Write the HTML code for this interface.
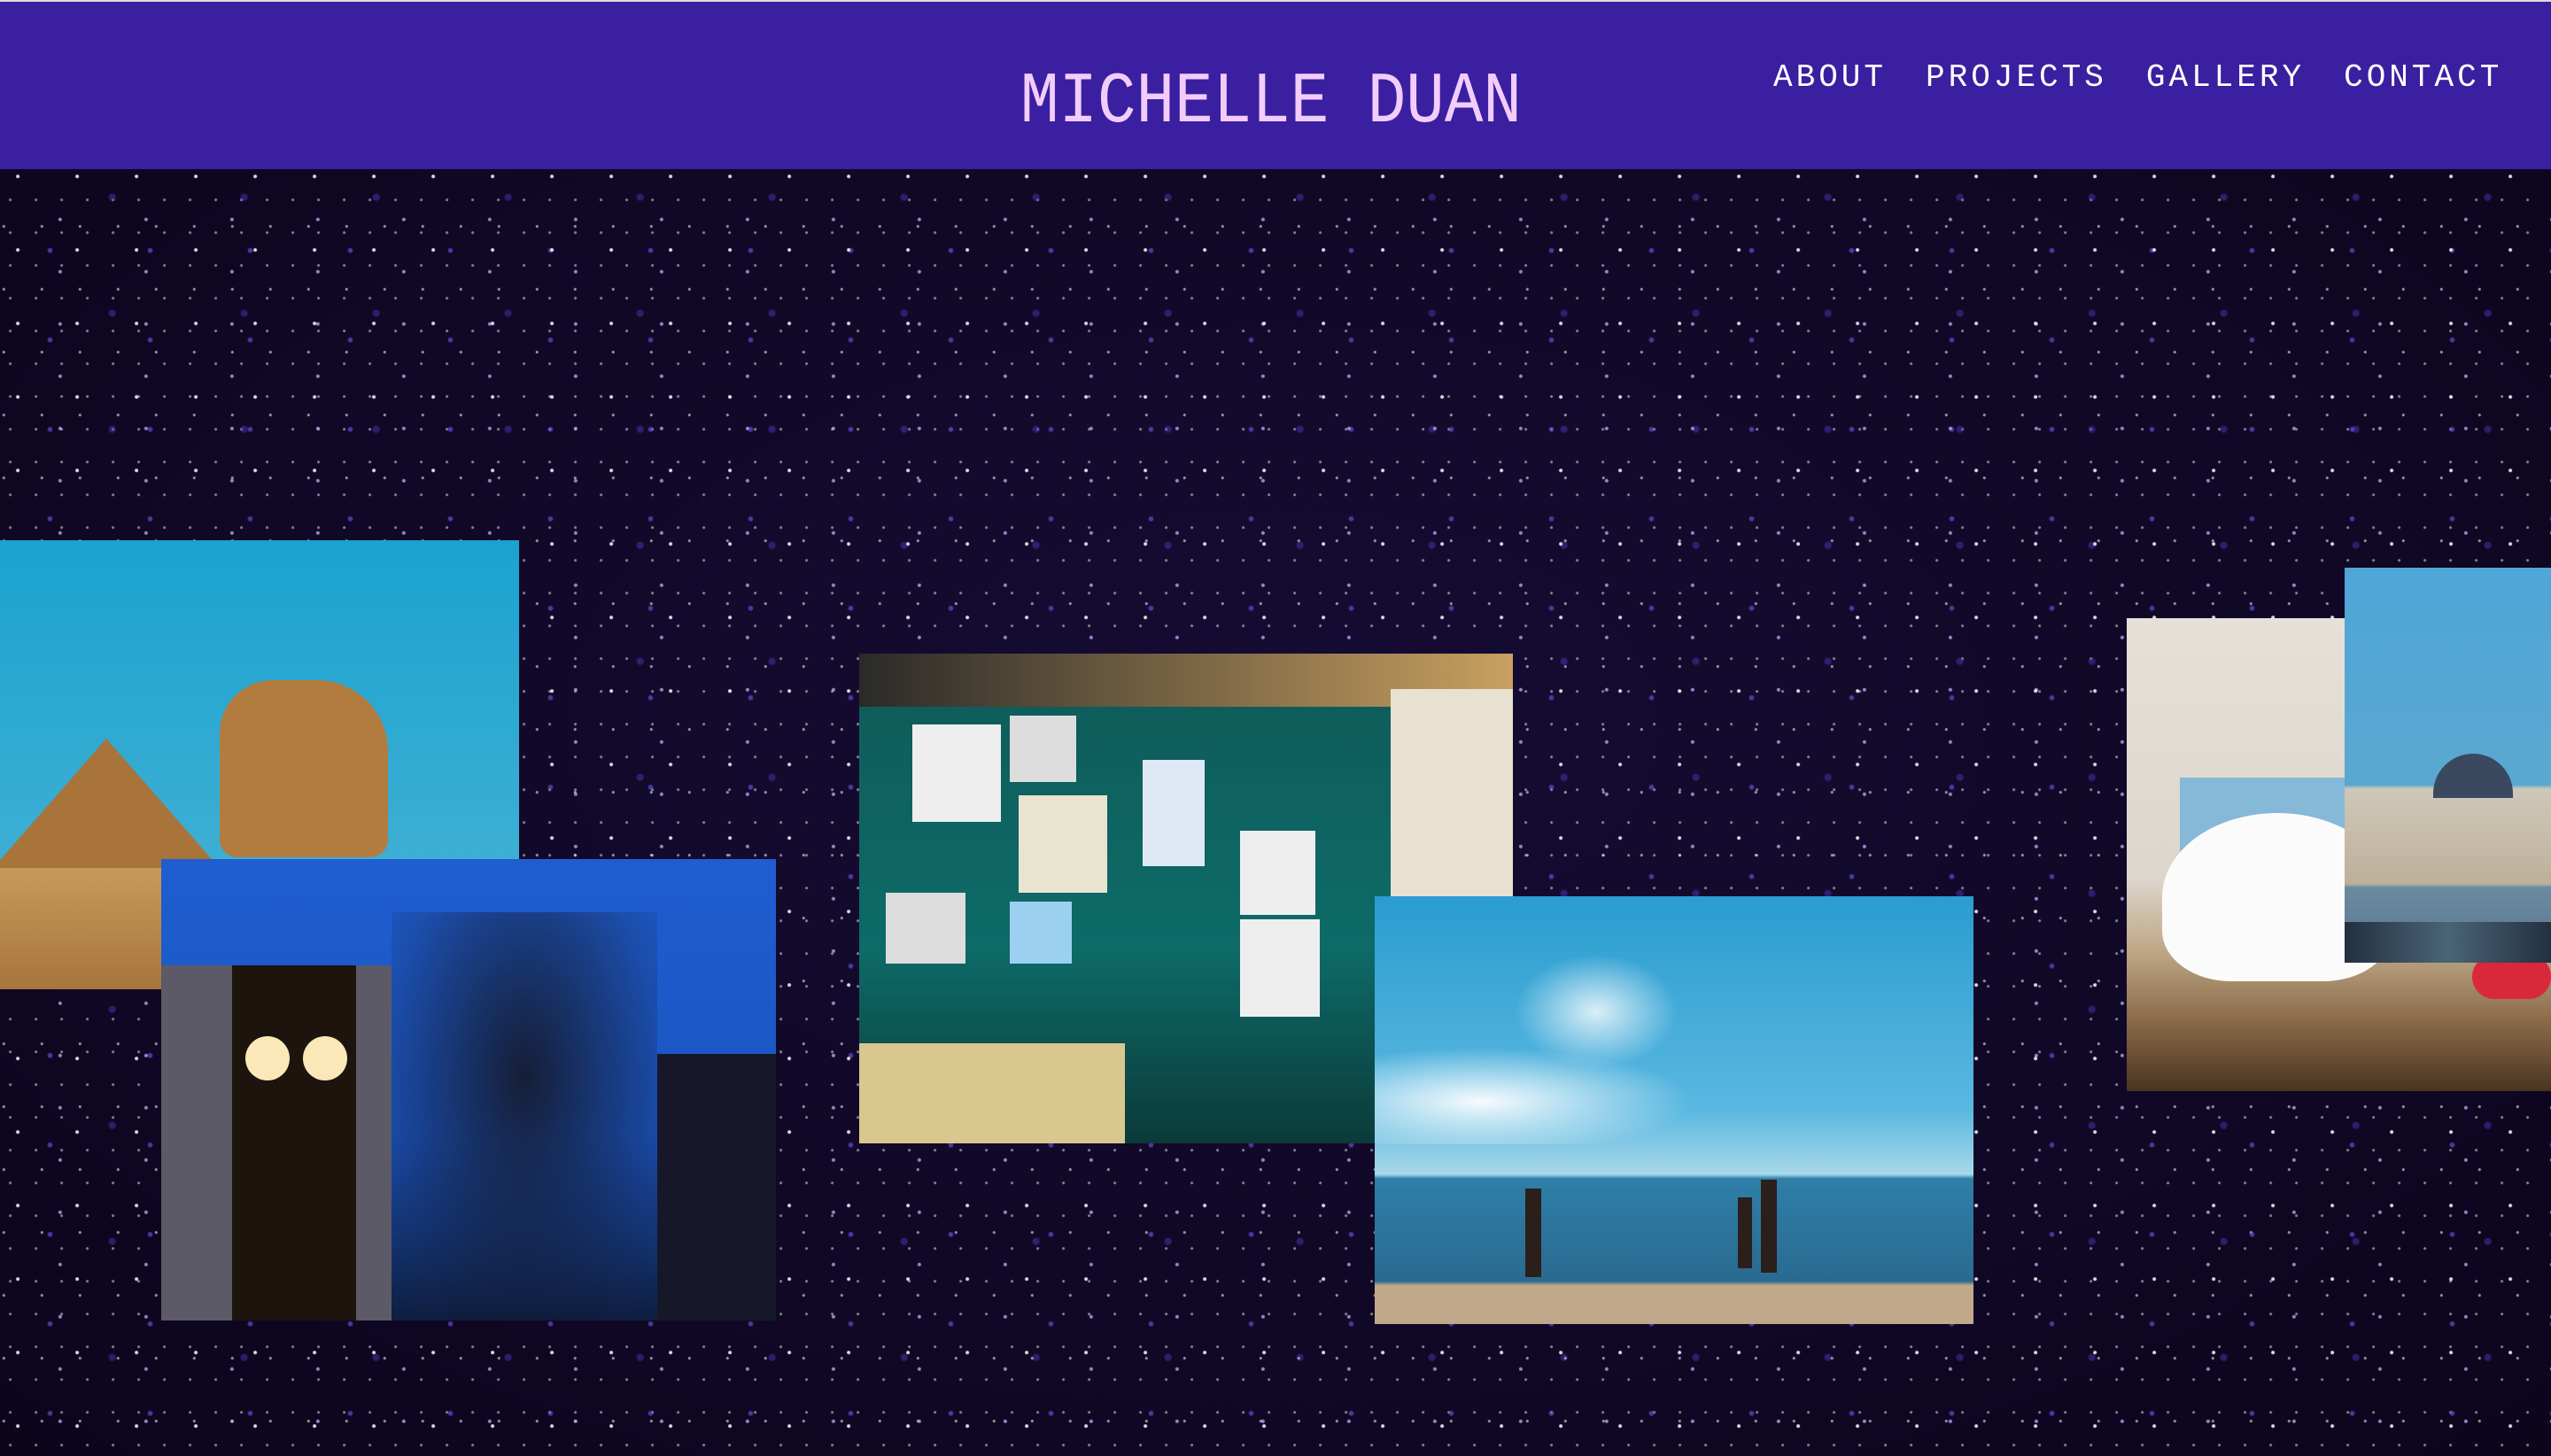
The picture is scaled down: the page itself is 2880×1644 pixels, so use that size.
<!DOCTYPE html>
<html><head><meta charset="utf-8"><style>
*{margin:0;padding:0;box-sizing:border-box}
html,body{width:2880px;height:1644px;overflow:hidden}
body{position:relative;background:#0f0722;
background-image:
radial-gradient(circle at 30% 40%, rgba(255,255,255,.85) 0 1.5px, transparent 2.5px),
radial-gradient(circle at 70% 20%, rgba(190,180,255,.75) 0 1.5px, transparent 2.5px),
radial-gradient(circle at 50% 80%, rgba(110,90,240,.6) 0 2px, transparent 3.5px),
radial-gradient(circle at 10% 60%, rgba(255,255,255,.55) 0 1.2px, transparent 2px),
radial-gradient(circle at 85% 70%, rgba(80,60,200,.45) 0 3px, transparent 5px),
radial-gradient(circle at 40% 10%, rgba(255,255,255,.5) 0 1px, transparent 2px),
radial-gradient(ellipse at 50% 50%, #160c34 0%, #0c051c 100%);
background-size:67px 83px,97px 59px,113px 101px,43px 71px,149px 131px,29px 37px,100% 100%;}
header{position:absolute;left:0;top:2px;width:2880px;height:189px;background:#3a1fa0}
.topline{position:absolute;left:0;top:0;width:2880px;height:2px;background:#ddd}
.title{position:absolute;left:1152px;top:72px;font-family:"Liberation Mono",monospace;font-size:78px;line-height:80px;color:#f2cdfb;letter-spacing:0px;transform:scale(0.93,1.05);transform-origin:left top;white-space:nowrap}
nav{position:absolute;left:2002px;top:66px;font-family:"Liberation Mono",monospace;font-size:36px;line-height:40px;color:#fff;white-space:nowrap;letter-spacing:4px}
nav span{margin-right:44px}
.ph{position:absolute;overflow:hidden}
</style></head><body>
<div class="topline"></div>
<header>
<div class="title">MICHELLE DUAN</div>
<nav><span>ABOUT</span><span>PROJECTS</span><span>GALLERY</span><span style="margin:0">CONTACT</span></nav>
</header>

<div class="ph" style="left:0;top:610px;width:586px;height:507px;background:linear-gradient(180deg,#1aa3cf 0%,#4cb3d6 100%)">
<div style="position:absolute;left:-20px;top:224px;width:0;height:0;border-left:140px solid transparent;border-right:140px solid transparent;border-bottom:160px solid #a8743a"></div>
<div style="position:absolute;left:248px;top:158px;width:190px;height:200px;background:#b27c3e;border-radius:60px 80px 20px 20px"></div>
<div style="position:absolute;left:0;top:370px;width:586px;height:140px;background:linear-gradient(#c89a5a,#a7743c)"></div>
</div>
<div class="ph" style="left:182px;top:970px;width:694px;height:521px;background:linear-gradient(180deg,#1f5ed0 0%,#1a55c0 60%,#0e1e40 100%)">
<div style="position:absolute;left:0;top:120px;width:260px;height:401px;background:#5b5a66"></div>
<div style="position:absolute;left:80px;top:120px;width:140px;height:401px;background:#1d140e"></div>
<div style="position:absolute;left:95px;top:200px;width:50px;height:50px;border-radius:50%;background:#fbe8b8"></div>
<div style="position:absolute;left:160px;top:200px;width:50px;height:50px;border-radius:50%;background:#fbe8b8"></div>
<div style="position:absolute;left:260px;top:60px;width:300px;height:461px;background:radial-gradient(ellipse at 50% 40%,rgba(20,20,30,.85),rgba(20,20,40,.2) 70%,transparent)"></div>
<div style="position:absolute;left:560px;top:220px;width:134px;height:301px;background:#16182a"></div>
</div>
<div class="ph" style="left:970px;top:738px;width:738px;height:553px;background:linear-gradient(180deg,#0f5a58 0%,#0d6b68 60%,#0b3a3a 100%)">
<div style="position:absolute;left:0;top:0;width:738px;height:60px;background:linear-gradient(90deg,#2a2a28,#c8a060)"></div>
<div style="position:absolute;left:600px;top:40px;width:138px;height:240px;background:#e8e0d0"></div>
<div style="position:absolute;left:60px;top:80px;width:100px;height:110px;background:#eee"></div>
<div style="position:absolute;left:170px;top:70px;width:75px;height:75px;background:#ddd"></div>
<div style="position:absolute;left:180px;top:160px;width:100px;height:110px;background:#e9e4d0"></div>
<div style="position:absolute;left:320px;top:120px;width:70px;height:120px;background:#dfe8f5"></div>
<div style="position:absolute;left:430px;top:200px;width:85px;height:95px;background:#eee"></div>
<div style="position:absolute;left:30px;top:270px;width:90px;height:80px;background:#ddd"></div>
<div style="position:absolute;left:170px;top:280px;width:70px;height:70px;background:#9cd0f0"></div>
<div style="position:absolute;left:430px;top:300px;width:90px;height:110px;background:#eee"></div>
<div style="position:absolute;left:0;top:440px;width:300px;height:113px;background:#d8c890"></div>
</div>
<div class="ph" style="left:1552px;top:1012px;width:676px;height:483px;background:linear-gradient(180deg,#2a9cd0 0%,#5ab8e0 50%,#a8d8ea 65%,#2e7fa8 66%,#2a6a90 90%,#c2a88a 91%)">
<div style="position:absolute;left:0;top:160px;width:400px;height:120px;background:radial-gradient(ellipse at 30% 60%,rgba(255,255,255,.95),rgba(255,255,255,0) 60%)"></div>
<div style="position:absolute;left:150px;top:60px;width:200px;height:140px;background:radial-gradient(ellipse,rgba(255,255,255,.8),transparent 65%)"></div>
<div style="position:absolute;left:170px;top:330px;width:18px;height:100px;background:#2a1f1a"></div>
<div style="position:absolute;left:410px;top:340px;width:16px;height:80px;background:#2a1f1a"></div>
<div style="position:absolute;left:436px;top:320px;width:18px;height:105px;background:#2a1f1a"></div>
</div>
<div class="ph" style="left:2401px;top:698px;width:479px;height:534px;background:linear-gradient(180deg,#e6e0d8 0%,#ddd6cc 55%,#bfa888 70%,#8a6b4a 85%,#4a3420 100%)">
<div style="position:absolute;left:60px;top:180px;width:250px;height:150px;background:#86b8d8"></div>
<div style="position:absolute;left:40px;top:220px;width:260px;height:190px;border-radius:50% 50% 30% 30%;background:#fbfbfb"></div>
<div style="position:absolute;left:390px;top:380px;width:89px;height:50px;border-radius:40px;background:#d8283a"></div>
</div>
<div class="ph" style="left:2647px;top:641px;width:233px;height:446px;background:linear-gradient(180deg,#4fa6d8 0%,#5aa8d0 55%,#cfc8b8 56%,#bdb09a 80%,#6a8aa0 81%,#5a7890 100%)">
<div style="position:absolute;left:100px;top:210px;width:90px;height:50px;border-radius:45px 45px 0 0;background:#3a4860"></div>
<div style="position:absolute;left:0;top:400px;width:233px;height:46px;background:linear-gradient(90deg,#233040,#4a6478,#233040)"></div>
</div>
</body></html>
